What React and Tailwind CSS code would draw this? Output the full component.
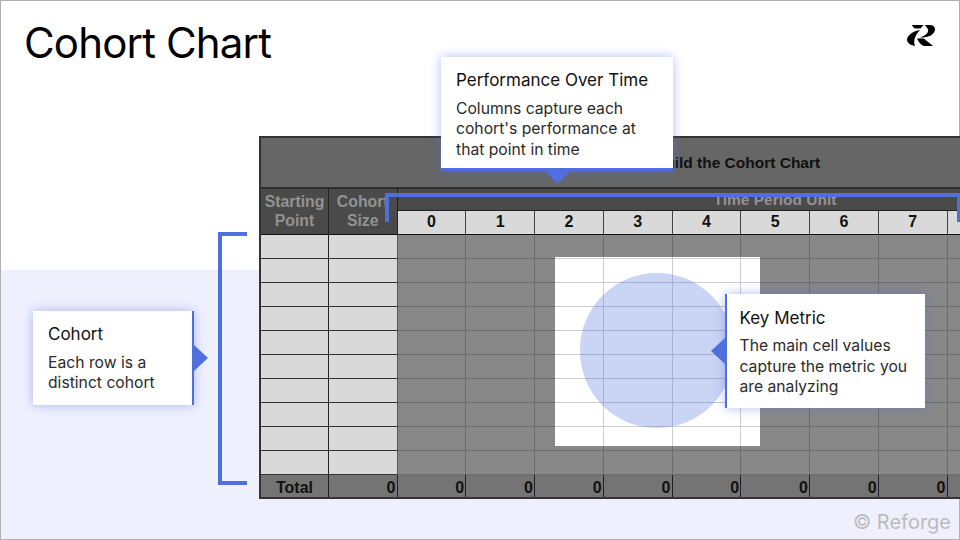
const inter = "font-['Inter',sans-serif]"
const arial = "font-['Liberation_Sans',Arial,sans-serif]"
const rows = [0, 1, 2, 3, 4, 5, 6, 7, 8, 9]
const periods = [0, 1, 2, 3, 4, 5, 6, 7, ""]

const Logo = () => (
    <svg viewBox="0 0 28 21" className="absolute left-[907px] top-[25px] h-[21px] w-[28px]" fill="#000">
        <path d="M5 0H16.5L13.5 3.5H9C7 3.5 6 2 5 0Z" />
        <path d="M18 0H23C27 0 29 3 27.5 6.5C25.5 11 20 12.5 13 12.5C18 11 22 8 21 4.5C20.5 3 19 1.5 18 0Z" />
        <path d="M13 5C6 6 1 10 0 14C0 18 3 20 8 21C6 16 8 10 13 5Z" />
        <path d="M10 13.5H17C19 16 23 18 26 21H17C14 20 11.5 17 10 13.5Z" />
    </svg>
)

const Callout = ({ title, lines, className }) => (
    <div className={`${inter} absolute bg-white border-[#4f6fdf] shadow-[0_0_10px_rgba(79,111,223,0.45)] ${className}`}>
        <div className="text-[17px] leading-[22px] text-[#111]">{title}</div>
        <div className="mt-[7.5px] text-[15.7px] leading-[20.5px] text-[#2a2a2a]">
            {lines.map((l) => <div key={l}>{l}</div>)}
        </div>
    </div>
)

const Table = () => (
    <div className={`${arial} absolute left-[259px] top-[136px] flex h-[363px] w-[701px] flex-col overflow-hidden border-y-2 border-l-2 border-[#333] font-bold`}>
        {/*Title row*/}
        <div className="flex h-[51px] shrink-0 items-center border-b-2 border-[#2e2e2e] bg-[#666] pl-[393px] pt-[1px] text-[15.5px] text-[#111]">
            Build the Cohort Chart
        </div>
        {/*Header*/}
        <div className="flex h-[45.5px] shrink-0 border-b border-[#111] bg-[#4a4a4a] text-[15.8px] leading-[18.5px] text-[#929292]">
            <div className="flex w-[68px] shrink-0 items-center justify-center border-r border-[#222] pt-[1px] text-center">Starting<br />Point</div>
            <div className="flex w-[68.5px] shrink-0 items-center justify-center border-r border-[#222] pt-[1px] text-center">Cohort<br />Size</div>
            <div className="flex w-[700px] shrink-0 flex-col">
                <div className="h-[22px] border-b border-[#222] pl-[316px] pt-[2px] text-[15.5px] leading-[18px]">Time Period Unit</div>
                <div className="flex flex-1 bg-[#d9d9d9] text-[16px] text-[#111]">
                    {periods.map((p, i) => (
                        <div key={i} className="flex w-[68.75px] shrink-0 items-center justify-center border-r border-[#444]">{p}</div>
                    ))}
                </div>
            </div>
        </div>
        {/*Body*/}
        <div className="flex h-[240px] shrink-0">
            <div className="w-[136.5px] shrink-0 border-r border-[#555]">
                {rows.map((r) => (
                    <div key={r} className="flex h-[24px] border-b border-[#333] bg-[#d9d9d9]">
                        <div className="w-[68px] border-r border-[#222]"></div>
                    </div>
                ))}
            </div>
            <div className="relative flex-1 overflow-hidden bg-white">
                {rows.map((r) => (
                    <div key={r} className="flex h-[24px] border-b border-[#ccc]">
                        {periods.map((p, i) => (
                            <div key={i} className="w-[68.75px] shrink-0 border-r border-[#ccc]"></div>
                        ))}
                    </div>
                ))}
                {/*Dim everything but the window*/}
                <div className="absolute left-[157.5px] top-[22.5px] h-[189px] w-[205px] shadow-[0_0_0_700px_rgba(0,0,0,0.467)]"></div>
            </div>
        </div>
        {/*Total*/}
        <div className="flex h-[23px] shrink-0 bg-[#747474] text-[16px] leading-[25px] text-[#111]">
            <div className="w-[68px] shrink-0 border-r border-[#222] text-center">Total</div>
            <div className="w-[68.5px] shrink-0 border-r border-[#222] pr-[1px] text-right">0</div>
            {periods.map((p, i) => (
                <div key={i} className="w-[68.75px] shrink-0 border-r border-[#222] pr-[1px] text-right">{i < 8 ? 0 : ""}</div>
            ))}
        </div>
    </div>
)

const App = () => {
    return (
        <div className="relative flex h-[540px] w-[960px] flex-col overflow-hidden">
            <div className="h-[270px] border-x border-t border-[#b0b0b0] bg-white pl-[23px] pt-[14px]">
                <h1 className={`${inter} text-[42px] font-normal leading-[56px] tracking-[-0.02em] text-black`}>Cohort Chart</h1>
            </div>
            <div className="flex flex-1 items-end justify-end border-x border-b border-[#b0b0b0] bg-[#eff0fe] pb-[3px] pr-[8px]">
                <span className={`${inter} text-[20px] leading-[28px] text-[#bbb]`}>© Reforge</span>
            </div>
            <Logo />
            <Table />
            {/*Circle on the window*/}
            <div className="absolute left-[580px] top-[273px] h-[155px] w-[154px] rounded-full bg-[#4f6fdf]/30"></div>
            {/*Brackets*/}
            <div className="absolute left-[218px] top-[232px] h-[253px] w-[29px] border-y-4 border-l-4 border-[#4f6fdf]"></div>
            <div className="absolute left-[385px] top-[193px] h-[29px] w-[575px] border-t-4 border-r-[3px] border-l-4 border-[#4f6fdf]"></div>
            {/*Callouts*/}
            <Callout
                title="Performance Over Time"
                lines={["Columns capture each", "cohort's performance at", "that point in time"]}
                className="left-[441px] top-[57px] h-[114px] w-[232px] border-b-[3px] pl-[15px] pt-[12px]"
            />
            <svg viewBox="0 0 25 13" className="absolute left-[545px] top-[171px] h-[13px] w-[25px]" fill="#4f6fdf"><path d="M0 0H25L12.5 13Z" /></svg>
            <Callout
                title="Cohort"
                lines={["Each row is a", "distinct cohort"]}
                className="left-[33px] top-[311px] h-[94px] w-[161px] border-r-2 pl-[15px] pt-[12px]"
            />
            <svg viewBox="0 0 14 26" className="absolute left-[194px] top-[345px] h-[26px] w-[14px]" fill="#4f6fdf"><path d="M0 0L14 13L0 26Z" /></svg>
            <Callout
                title="Key Metric"
                lines={["The main cell values", "capture the metric you", "are analyzing"]}
                className="left-[725px] top-[294px] h-[114px] w-[200px] border-l-2 pl-[12.5px] pt-[12.5px]"
            />
            <svg viewBox="0 0 14 26" className="absolute left-[711px] top-[338px] h-[26px] w-[14px]" fill="#4f6fdf"><path d="M14 0L0 13L14 26Z" /></svg>
        </div>
    )
}
export default App
